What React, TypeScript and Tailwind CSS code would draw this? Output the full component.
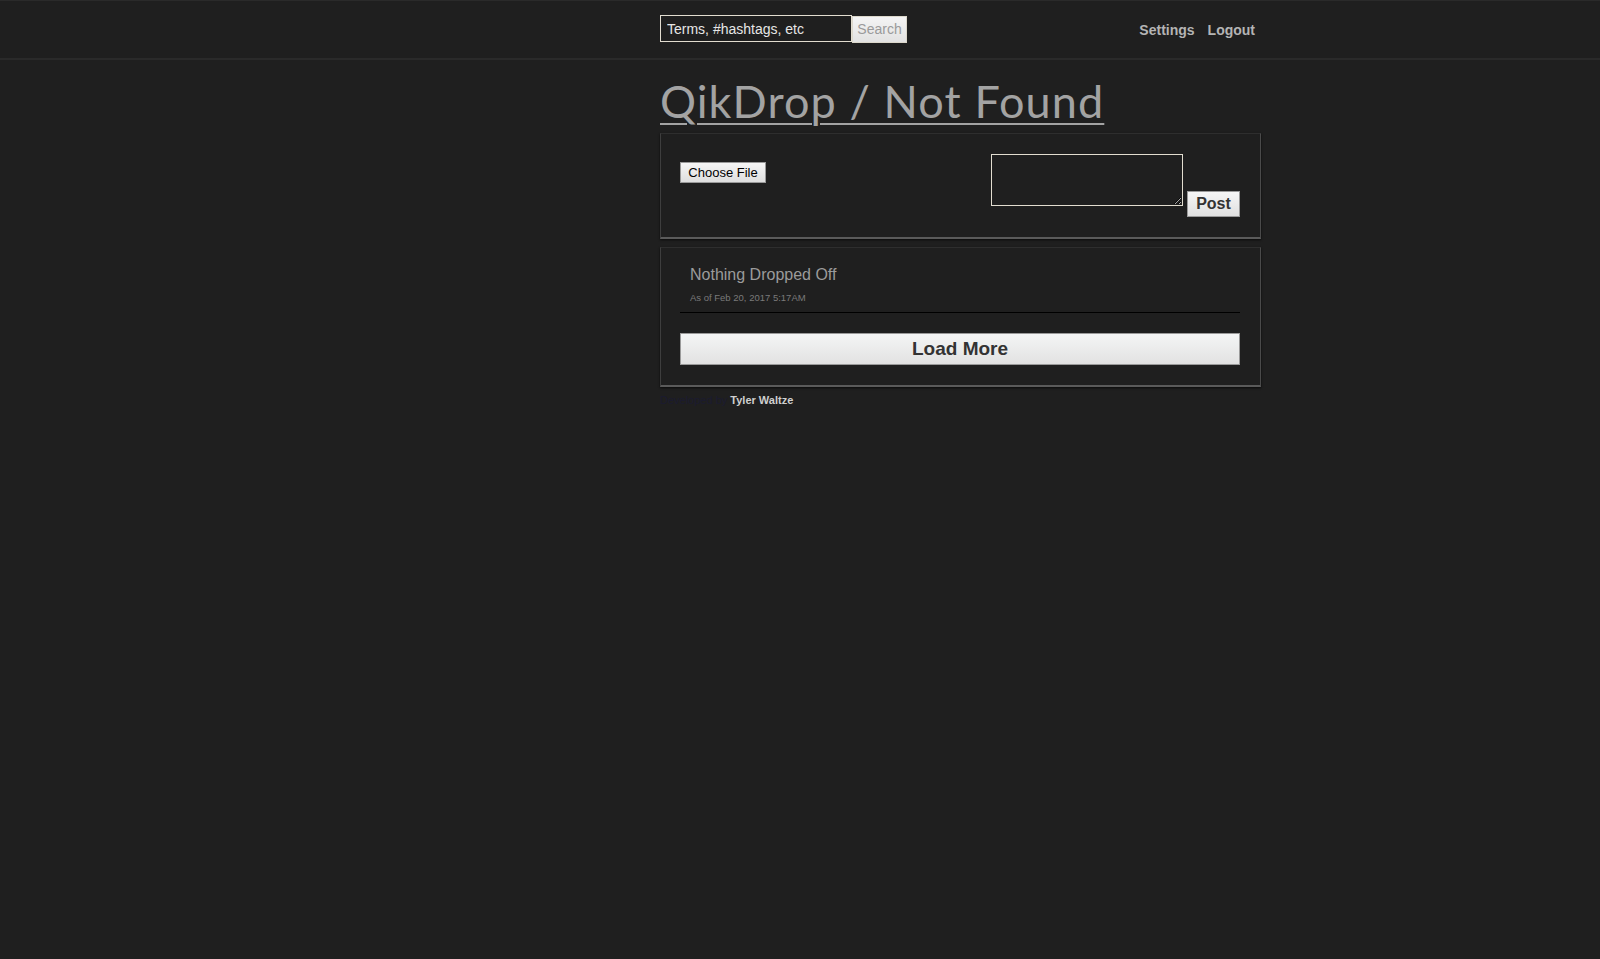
import React from "react";

export default function App() {
  return (
    <div className="min-h-[959px] w-full bg-[#1f1f1f] font-['Liberation_Sans',Arial,sans-serif]">
      <header className="h-[60px] border-t border-t-[#2a2a2a] border-b-2 border-b-[#2a2a2a] bg-[#1f1f1f]">
        <div className="mx-auto flex h-full w-[940px] items-start">
          <div className="ml-[330px] flex w-[601px] items-start justify-between">
            <div className="mt-[14px] flex items-start">
              <input
                className="h-[27px] w-[192px] border border-[#e2ddd0] bg-[#1f1f1f] px-[6px] text-[14px] text-[#e6e6e6] outline-none placeholder:text-[#e6e6e6]"
                placeholder="Terms, #hashtags, etc"
              />
              <button className="mt-[1px] h-[27px] w-[55px] border border-[#dcd8cc] bg-gradient-to-b from-[#f4f4f4] to-[#e2e2e2] text-[14px] text-[#9a9a9a]">
                Search
              </button>
            </div>
            <nav className="mt-[19px] mr-[6px] flex gap-[13px] text-[14px] font-bold text-[#b4b4b4]">
              <a>Settings</a>
              <a>Logout</a>
            </nav>
          </div>
        </div>
      </header>

      <main className="mx-auto w-[940px]">
        <div className="ml-[330px] w-[601px]">
          <h1 className="mt-[16px] mb-[7px] font-['Lato',sans-serif] text-[45px] leading-[50px] font-normal tracking-[1.1px] text-[#a3a3a3]">
            <a className="underline decoration-2 underline-offset-[5px]">QikDrop / Not Found</a>
          </h1>

          <section className="border border-t-[#2e2e2e] border-l-[#3e3e3e] border-r-[#4a4a4a] border-b-2 border-b-[#5a5a5a] shadow-[0_1px_2px_rgba(0,0,0,0.7)] pl-[19px] pr-[20px] pt-5 pb-5">
            <div className="flex items-start justify-between">
              <button className="mt-[8px] h-[21px] w-[86px] border border-[#9a9a9a] bg-gradient-to-b from-[#f6f6f6] to-[#dedede] text-[13px] text-black">
                Choose File
              </button>
              <div className="flex items-start gap-[4px]">
                <textarea className="h-[52px] w-[192px] border border-[#e2ddd0] bg-[#1f1f1f] text-[#ddd] outline-none" />
                <button className="mt-[37px] h-[26px] w-[53px] border border-[#9a9a9a] bg-gradient-to-b from-[#f6f6f6] to-[#e0e0e0] text-[16px] font-bold text-[#333]">
                  Post
                </button>
              </div>
            </div>
          </section>

          <section className="mt-[8px] border border-t-[#2e2e2e] border-l-[#3e3e3e] border-r-[#4a4a4a] border-b-2 border-b-[#5a5a5a] shadow-[0_1px_2px_rgba(0,0,0,0.7)] pl-[19px] pr-[20px] pt-[18px] pb-5">
            <div className="border-b border-black pl-[10px] pb-[8px]">
              <div className="text-[16px] leading-[18px] text-[#9b9b9b]">Nothing Dropped Off</div>
              <div className="mt-[8px] text-[9.5px] leading-[12px] text-[#7a7a7a]">As of Feb 20, 2017 5:17AM</div>
            </div>
            <button className="mt-[20px] h-[32px] w-full border border-[#9a9a9a] bg-gradient-to-b from-[#f4f5f5] to-[#e2e2e2] text-[19px] font-bold text-[#333]">
              Load More
            </button>
          </section>

          <footer className="mt-[6px] text-[11px] leading-[14px]">
            <span className="text-[#1b1b30]">Developed by </span>
            <a className="font-bold text-[#cfcfcf]">Tyler Waltze</a>
          </footer>
        </div>
      </main>
    </div>
  );
}
